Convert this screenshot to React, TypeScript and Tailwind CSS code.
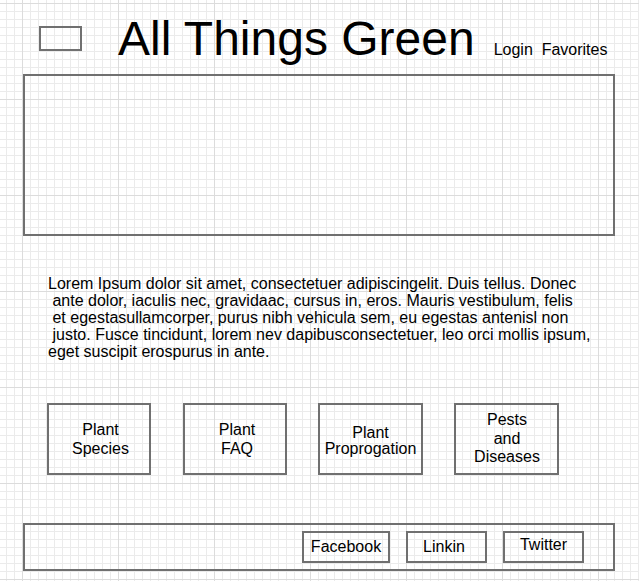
import React from "react";

const lines = [
  "Lorem Ipsum dolor sit amet, consectetuer adipiscingelit. Duis tellus. Donec",
  " ante dolor, iaculis nec, gravidaac, cursus in, eros. Mauris vestibulum, felis",
  " et egestasullamcorper, purus nibh vehicula sem, eu egestas antenisl non",
  " justo. Fusce tincidunt, lorem nev dapibusconsectetuer, leo orci mollis ipsum,",
  "eget suscipit erospurus in ante.",
];

export default function App() {
  return (
    <div
      className="relative w-[639px] h-[581px] overflow-hidden bg-white text-black font-['Liberation_Sans',Arial,sans-serif] bg-[image:linear-gradient(to_right,#dcdcdc_1px,transparent_1px),linear-gradient(to_bottom,#dcdcdc_1px,transparent_1px),linear-gradient(to_right,#ebebeb_1px,transparent_1px),linear-gradient(to_bottom,#ebebeb_1px,transparent_1px)] bg-[size:96px_96px,96px_96px,8px_8px,8px_8px] bg-[position:22px_0px,0px_3px,6px_0px,0px_3px]"
    >
      {/* Header */}
      <div className="flex items-start h-[74px]">
        <div className="ml-[39px] mt-[26px] w-[43px] h-[25px] border-2 border-[#707070]" />
        <div className="ml-[36px] mt-[15px] text-[48px] leading-[48px] whitespace-nowrap">
          All Things Green
        </div>
        <div className="ml-[19px] mt-[42px] text-[16px] leading-[16px] whitespace-pre">
          {"Login  Favorites"}
        </div>
      </div>

      {/* Hero */}
      <div className="ml-[23px] w-[592px] h-[162px] border-2 border-[#707070]" />

      {/* Paragraph */}
      <div className="ml-[48px] mt-[39px] text-[16px] leading-[17px]">
        {lines.map((l, i) => (
          <div key={i} className="whitespace-pre">
            {l}
          </div>
        ))}
      </div>

      {/* Nav boxes */}
      <div className="flex ml-[47px] mt-[43px]">
        <div className="w-[104px] h-[72px] border-2 border-[#707070] flex items-center justify-center text-center text-[16px] leading-[19px] pl-[3px]">
          <div>
            Plant
            <br />
            Species
          </div>
        </div>
        <div className="ml-[32px] w-[104px] h-[72px] border-2 border-[#707070] flex items-center justify-center text-center text-[16px] leading-[19px] pl-[4px]">
          <div>
            Plant
            <br />
            FAQ
          </div>
        </div>
        <div className="ml-[31px] w-[105px] h-[72px] border-2 border-[#707070] flex items-center justify-center text-center text-[16px] leading-[16px] pt-[4px]">
          <div>
            Plant
            <br />
            Proprogation
          </div>
        </div>
        <div className="ml-[31px] w-[105px] h-[72px] border-2 border-[#707070] flex items-center justify-center text-center text-[16px] leading-[18.4px] pl-[1px]">
          <div>
            Pests
            <br />
            and
            <br />
            Diseases
          </div>
        </div>
      </div>

      {/* Footer */}
      <div className="ml-[23px] mt-[48px] w-[592px] h-[48px] border-2 border-[#707070] flex items-center justify-end pr-[29px] gap-[16px]">
        <div className="w-[88px] h-[32px] border-2 border-[#707070] flex items-center justify-center text-[16px]">
          Facebook
        </div>
        <div className="w-[81px] h-[32px] border-2 border-[#707070] flex items-center justify-center text-[16px] pr-[5px]">
          Linkin
        </div>
        <div className="w-[81px] h-[32px] border-2 border-[#707070] flex items-center justify-center text-[16px] pb-[4px]">
          Twitter
        </div>
      </div>
    </div>
  );
}
